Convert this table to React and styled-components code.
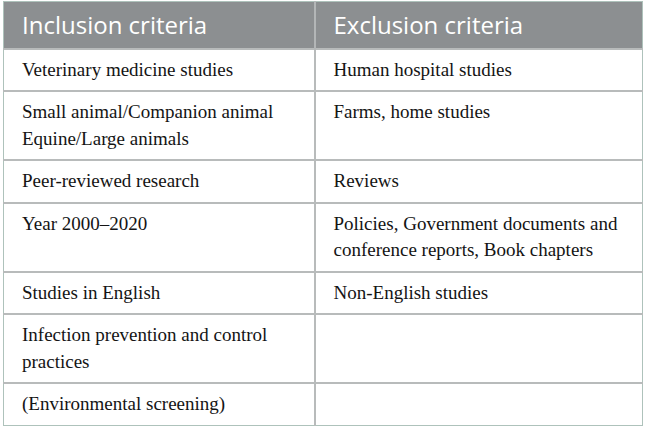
import React from "react";
import styled, { createGlobalStyle } from "styled-components";

const GlobalStyle = createGlobalStyle`
  html, body {
    margin: 0;
    padding: 0;
    background: #ffffff;
  }
  body {
    padding: 1px 0 0 3px;
  }
`;

const rows = [
  ["Veterinary medicine studies", "Human hospital studies"],
  ["Small animal/Companion animal\nEquine/Large animals", "Farms, home studies"],
  ["Peer-reviewed research", "Reviews"],
  ["Year 2000–2020", "Policies, Government documents and conference reports, Book chapters"],
  ["Studies in English", "Non-English studies"],
  ["Infection prevention and control practices", ""],
  ["(Environmental screening)", ""],
];

const Table = styled.table`
  width: 640px;
  border-collapse: collapse;
  table-layout: fixed;
  border: 1px solid #aec2bb;
`;

const HeadCell = styled.th`
  box-sizing: border-box;
  width: ${(p) => p.$width || "auto"};
  height: 47px;
  padding: 0 18px;
  background: #8c8f91;
  color: #ffffff;
  font-family: "Open Sans", "Noto Sans", sans-serif;
  font-weight: 400;
  font-size: 24px;
  text-align: left;
  vertical-align: middle;
  border-right: 2px solid #b3b6b7;
  &:last-child {
    border-right: none;
  }
`;

const Row = styled.tr`
  border-top: 2px solid #b8bbbb;
`;

const Cell = styled.td`
  box-sizing: border-box;
  padding: 7px 18px 7px;
  font-family: "Liberation Serif", "Times New Roman", serif;
  font-size: 19px;
  line-height: 26.5px;
  color: #141414;
  vertical-align: top;
  white-space: pre-line;
  border-right: 2px solid #b8bbbb;
  &:last-child {
    border-right: none;
  }
`;

export default function App() {
  return (
    <>
      <GlobalStyle />
      <Table>
        <thead>
          <tr>
            <HeadCell $width="311px">Inclusion criteria</HeadCell>
            <HeadCell>Exclusion criteria</HeadCell>
          </tr>
        </thead>
        <tbody>
          {rows.map(([inc, exc], i) => (
            <Row key={i}>
              <Cell>{inc}</Cell>
              <Cell>{exc}</Cell>
            </Row>
          ))}
        </tbody>
      </Table>
    </>
  );
}
